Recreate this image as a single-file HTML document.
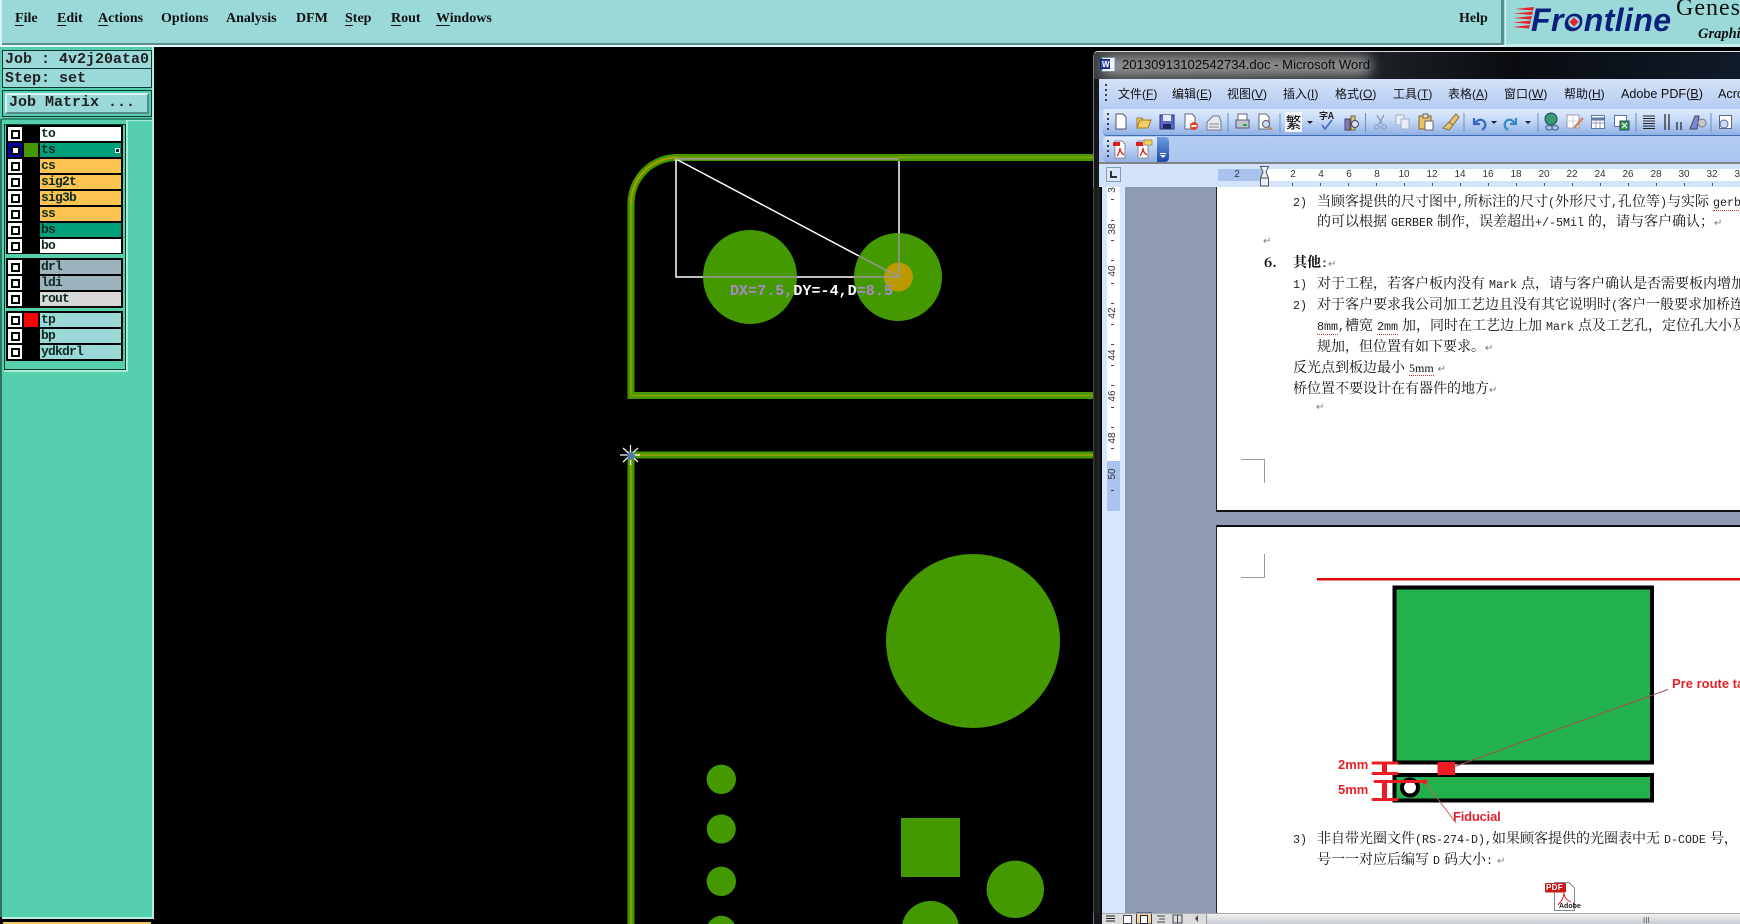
<!DOCTYPE html>
<html><head><meta charset="utf-8"><title>Genesis</title>
<style>
html,body{margin:0;padding:0;width:1740px;height:924px;overflow:hidden;background:#000}
#p{position:relative;width:1740px;height:924px;overflow:hidden;background:#000}
.a{position:absolute}
.mn{position:absolute;top:9px;font:bold 14px/20px "Liberation Serif",serif;color:#111;white-space:nowrap}
.mn u{text-underline-offset:3px;text-decoration-thickness:1px}
.mo{font-family:"Liberation Mono",monospace;font-weight:bold;color:#222;white-space:nowrap;position:absolute}
.r{position:absolute;left:8px;width:114px;height:14px}
.c{position:absolute;left:0;top:0;width:14px;height:14px;background:#fff}
.c:after{content:"";position:absolute;left:3px;top:3px;width:5px;height:5px;border:2px solid #000;background:#fff}
.b{position:absolute;left:16px;top:0;width:14px;height:14px}
.l{position:absolute;left:32px;top:0;width:81px;height:14px;font:bold 13px/14px "Liberation Mono",monospace;letter-spacing:-.8px;color:#0c2a20;text-indent:1px;overflow:hidden}
.wm{position:absolute;top:85px;font:12px/18px "Liberation Sans","Noto Sans CJK SC",sans-serif;color:#111;white-space:nowrap}
.wm.e{font-size:12.6px}
.rn{position:absolute;top:168px;width:20px;text-align:center;font:10px/13px "Liberation Sans",sans-serif;color:#333}
.vr{position:absolute;left:1103px;width:20px;height:12px;text-align:center;font:10px/12px "Liberation Sans",sans-serif;color:#333;transform:rotate(-90deg)}
.t{position:absolute;white-space:nowrap;font:14px/20px "Noto Serif CJK SC","Liberation Serif",serif;color:#111}
.t .m,.m{font:11.67px/20px "Liberation Mono",monospace;color:#222}
.t .s{font:12px/20px "Liberation Serif",serif}
.g{display:inline-block;width:4px}
.e1{position:absolute;white-space:nowrap;font:10px/12px "DejaVu Sans",sans-serif;color:#777}
.w{border-bottom:1px dotted #c33}
.red{position:absolute;white-space:nowrap;font:bold 13px/16px "Liberation Sans",sans-serif;color:#e4222c}
</style></head><body><div id="p">

<!-- top menu bar -->
<div class="a" style="left:0;top:0;width:1505px;height:47px;background:#9bd8d8;border-left:2px solid #d8f2f2;box-sizing:border-box"></div>
<div class="a" style="left:2px;top:43px;width:1501px;height:2px;background:#5b8e90"></div>
<div class="a" style="left:0;top:45px;width:1505px;height:2px;background:#e6f7f7"></div>
<div class="a" style="left:1501px;top:0;width:3px;height:45px;background:#5b8e90"></div>
<div class="a" style="left:1505px;top:0;width:235px;height:47px;background:#9bd8d8;border-left:1px solid #d8f2f2;box-sizing:border-box"></div>
<div class="a" style="left:1505px;top:44px;width:235px;height:3px;background:#c4eded"></div>
<span class="mn" style="left:15px"><u>F</u>ile</span>
<span class="mn" style="left:57px"><u>E</u>dit</span>
<span class="mn" style="left:98px"><u>A</u>ctions</span>
<span class="mn" style="left:161px">Options</span>
<span class="mn" style="left:226px">Analysis</span>
<span class="mn" style="left:296px">DFM</span>
<span class="mn" style="left:345px"><u>S</u>tep</span>
<span class="mn" style="left:391px"><u>R</u>out</span>
<span class="mn" style="left:436px"><u>W</u>indows</span>
<span class="mn" style="left:1459px">Help</span>
<!-- frontline logo -->
<svg class="a" style="left:0;top:0" width="1740" height="47"><g fill="#e8222a"><polygon points="1515,9 1534,7 1533,10.500"/><polygon points="1514,13.500 1533,11.500 1532,15"/><polygon points="1513.500,18 1532,16 1531,19.500"/><polygon points="1513,22.500 1531,20.500 1530,24"/><polygon points="1513,27 1530,25 1529,28.500"/></g></svg>
<div class="a" style="left:1531px;top:1px;font:italic bold 32px/38px 'Liberation Sans',sans-serif;color:#0b1f7c;white-space:nowrap;letter-spacing:.4px">Frontline</div>
<svg class="a" style="left:1564px;top:12px" width="20" height="20"><circle cx="10" cy="10" r="7" fill="#9bd8d8" stroke="#0b1f7c" stroke-width="2.4"/><polygon points="10,5.500 14.500,10 10,14.500 5.500,10" fill="#e8222a"/></svg>
<div class="a" style="left:1676px;top:-7px;font:24px/30px 'Liberation Serif',serif;color:#111;letter-spacing:1px;white-space:nowrap">Genesis</div>
<div class="a" style="left:1698px;top:25px;font:italic bold 14.5px/18px 'Liberation Serif',serif;color:#111;white-space:nowrap">Graphics</div>

<!-- left panel -->
<div class="a" style="left:0;top:47px;width:152px;height:870px;background:#55cfae"></div>
<div class="a" style="left:152px;top:47px;width:2px;height:872px;background:#b4efe0"></div>
<div class="a" style="left:0;top:119px;width:2px;height:798px;background:#2f7463"></div>
<div class="a" style="left:2px;top:118px;width:150px;height:2px;background:#2f8a74"></div>
<div class="a" style="left:128px;top:120px;width:24px;height:1px;background:#a8ecd8"></div>
<div class="a" style="left:2px;top:917px;width:152px;height:2px;background:#b4efe0"></div>
<div class="a" style="left:2px;top:921px;width:150px;height:4px;background:#f5c65a;border:1px solid #000;box-sizing:border-box"></div>
<div class="a" style="left:2px;top:50px;width:150px;height:38px;background:#9bd8d8;border:1px solid #0c3a30;box-sizing:border-box"></div>
<div class="a" style="left:3px;top:68px;width:148px;height:1px;background:#0c3a30"></div>
<div class="mo" style="left:5px;top:51px;font-size:15px;line-height:18px">Job : 4v2j20ata0</div>
<div class="mo" style="left:5px;top:70px;font-size:15px;line-height:18px">Step: set</div>
<div class="a" style="left:2px;top:90px;width:150px;height:27px;border:1px solid #0c3a30;box-sizing:border-box"></div>
<div class="a" style="left:5px;top:93px;width:144px;height:21px;background:#9bd8d8;border:2px solid;border-color:#d8f4f4 #55898c #55898c #d8f4f4;box-sizing:border-box"></div>
<div class="mo" style="left:9px;top:94px;font-size:15px;line-height:18px">Job Matrix ...</div>
<!-- layers frame -->
<div class="a" style="left:4px;top:124px;width:122px;height:246px;border:1px solid #0c3a30;box-sizing:border-box;background:#55cfae"></div>
<div class="a" style="left:126px;top:120px;width:2px;height:252px;background:#a8ecd8"></div>
<div class="a" style="left:4px;top:370px;width:124px;height:2px;background:#a8ecd8"></div>
<div class="a" style="left:6px;top:125px;width:117px;height:129px;background:#000"></div>
<div class="a" style="left:6px;top:258px;width:117px;height:50px;background:#000"></div>
<div class="a" style="left:6px;top:311px;width:117px;height:50px;background:#000"></div>

<div class="r" style="top:127px"><i class="c"></i><span class="l" style="background:#fff">to</span></div>
<div class="r" style="top:143px"><i class="c" style="background:#0000aa"></i><i class="b" style="background:#449900"></i><span class="l" style="background:#00a07a">ts</span></div>
<div class="r" style="top:159px"><i class="c"></i><span class="l" style="background:#fdc451">cs</span></div>
<div class="r" style="top:175px"><i class="c"></i><span class="l" style="background:#fdc451">sig2t</span></div>
<div class="r" style="top:191px"><i class="c"></i><span class="l" style="background:#fdc451">sig3b</span></div>
<div class="r" style="top:207px"><i class="c"></i><span class="l" style="background:#fdc451">ss</span></div>
<div class="r" style="top:223px"><i class="c"></i><span class="l" style="background:#00a07a">bs</span></div>
<div class="r" style="top:239px"><i class="c"></i><span class="l" style="background:#fff">bo</span></div>
<div class="r" style="top:260px"><i class="c"></i><span class="l" style="background:#9db3bd">drl</span></div>
<div class="r" style="top:276px"><i class="c"></i><span class="l" style="background:#9db3bd">ldi</span></div>
<div class="r" style="top:292px"><i class="c"></i><span class="l" style="background:#d8d8d8">rout</span></div>
<div class="r" style="top:313px"><i class="c"></i><i class="b" style="background:#f00"></i><span class="l" style="background:#9bd8d8">tp</span></div>
<div class="r" style="top:329px"><i class="c"></i><span class="l" style="background:#9bd8d8">bp</span></div>
<div class="r" style="top:345px"><i class="c"></i><span class="l" style="background:#9bd8d8">ydkdrl</span></div>
<div class="a" style="left:115px;top:148px;width:3px;height:3px;border:1px solid #fff;background:#0c2a20"></div>

<!-- PCB -->
<svg class="a" style="left:0;top:0" width="1740" height="924">
<g fill="none" stroke-linecap="butt">
<path d="M1095 157.500H677A46 46 0 0 0 631 203.500V395.500H1095" stroke="#449900" stroke-width="7"/>
<path d="M1095 157.500H677M631 203.500V395.500H1095" stroke="#7f9f00" stroke-width="2"/>
<path d="M677 157.500A46 46 0 0 0 631 203.500" stroke="#b09a00" stroke-width="2"/>
<path d="M1095 455H631V924" stroke="#449900" stroke-width="7"/>
<path d="M1095 455H631V924" stroke="#8a9c00" stroke-width="2"/>
</g>
<g fill="#449900">
<circle cx="750" cy="277" r="47"/><circle cx="898" cy="277" r="44"/>
<circle cx="973" cy="641" r="87"/>
<circle cx="721.300" cy="779.300" r="14.700"/><circle cx="721.300" cy="829" r="14.500"/><circle cx="721.300" cy="881.300" r="14.700"/><circle cx="721.300" cy="930.400" r="14.700"/>
<rect x="901" y="818" width="59" height="59"/>
<circle cx="1015.300" cy="889.300" r="28.700"/><circle cx="930.500" cy="930" r="29"/>
</g>
<circle cx="898.500" cy="277" r="14.500" fill="#bb9900"/>
<g fill="none" stroke-width="1.500">
<path d="M676 159V277H703M797 277H854M899 161V233M676 159L859 256" stroke="#fff"/>
<path d="M676 159H899M703 277H797M854 277H899V233M859 256L899 277" stroke="#999"/>
</g>
<g stroke="#fff" stroke-width="1.200">
<path d="M620 455H640M630.500 445V465M623 448L638 462M638 448L623 462"/>
</g>
<circle cx="631" cy="456" r="4" fill="#5577aa"/>
</svg>
<div class="a" style="left:730px;top:282px;font:bold 15px/20px 'Liberation Mono',monospace;letter-spacing:.05px;white-space:nowrap;color:#aa88cc">DX=7.5,<span style="color:#fff">DY=-4,D</span>=8.5</div>

<!-- Word window -->
<div class="a" style="left:1093px;top:51px;width:647px;height:873px;background:#14181d;border-radius:5px 0 0 0;border-top:1px solid #d8d8d8;border-left:1px solid #777;box-sizing:border-box;overflow:hidden">
<div class="a" style="left:0;top:0;width:646px;height:27px;background:linear-gradient(90deg,#3a3e42 0,#20252a 40%,#0a0c10 65%,#101a28 100%)"></div>
<div class="a" style="left:8px;top:4px;width:270px;height:20px;background:#909090;filter:blur(6px);border-radius:10px"></div>
</div>
<div class="a" style="left:1122px;top:55px;font:13.1px/19px 'Liberation Sans',sans-serif;color:#0c0c0c;white-space:nowrap">20130913102542734.doc - Microsoft Word</div>
<svg class="a" style="left:1100px;top:57px" width="17" height="17"><rect x="2" y="0.500" width="13" height="14" fill="#f2f4fa" stroke="#7a88a8"/><rect x="0.500" y="2.500" width="9" height="9" fill="#2a4aa8" stroke="#16256a"/><text x="2" y="10" font-size="8" font-weight="bold" fill="#fff" font-family="Liberation Sans">W</text></svg>

<!-- menus -->
<div class="a" style="left:1099px;top:79px;width:641px;height:30px;background:linear-gradient(#d5e3f9,#b4cbf2)"></div>
<div class="a" style="left:1099px;top:109px;width:641px;height:54px;background:linear-gradient(#c2d6f6,#a9c4f0)"></div>
<div class="a" style="left:1103px;top:109px;width:637px;height:27px;background:linear-gradient(#e0ebfc 0,#c4d8f7 45%,#8fb0e4 100%);border-bottom:1px solid #3c6cb4;border-radius:4px 0 0 4px;box-sizing:border-box"></div>
<div class="a" style="left:1103px;top:137px;width:55px;height:25px;background:linear-gradient(#e0ebfc,#8fb0e4);border-radius:4px 0 0 4px"></div>
<div class="a" style="left:1157px;top:137px;width:12px;height:25px;background:linear-gradient(#6f9be0,#1f4aa8);border-radius:0 4px 4px 0"></div>
<div class="a" style="left:1160px;top:153px;width:6px;height:1px;background:#fff"></div>
<div class="a" style="left:1160px;top:155px;border-left:3px solid transparent;border-right:3px solid transparent;border-top:3px solid #fff"></div>
<div class="a" style="left:1099px;top:162px;width:641px;height:2px;background:#808488"></div>
<span class="wm" style="left:1118px">文件(<u>F</u>)</span>
<span class="wm" style="left:1172px">编辑(<u>E</u>)</span>
<span class="wm" style="left:1227px">视图(<u>V</u>)</span>
<span class="wm" style="left:1283px">插入(<u>I</u>)</span>
<span class="wm" style="left:1335px">格式(<u>O</u>)</span>
<span class="wm" style="left:1393px">工具(<u>T</u>)</span>
<span class="wm" style="left:1448px">表格(<u>A</u>)</span>
<span class="wm" style="left:1504px">窗口(<u>W</u>)</span>
<span class="wm" style="left:1564px">帮助(<u>H</u>)</span>
<span class="wm e" style="left:1621px">Adobe PDF(<u>B</u>)</span>
<span class="wm e" style="left:1718px">Acrobat</span>

<!-- ruler area -->
<div class="a" style="left:1099px;top:164px;width:641px;height:23px;background:#d3e3fb"></div>
<div class="a" style="left:1218px;top:169px;width:44px;height:12px;background:#a9c2ee"></div>
<div class="a" style="left:1262px;top:169px;width:478px;height:12px;background:#fff"></div>
<div class="a" style="left:1106px;top:167px;width:15px;height:15px;background:#dce8fa;border:1px solid #7f9db9;box-sizing:border-box"></div>
<div class="a" style="left:1110px;top:171px;width:2px;height:7px;background:#333"></div>
<div class="a" style="left:1110px;top:176px;width:7px;height:2px;background:#333"></div>
<span class="rn" style="left:1227px">2</span>
<span class="rn" style="left:1283px">2</span><span class="rn" style="left:1311px">4</span><span class="rn" style="left:1339px">6</span><span class="rn" style="left:1367px">8</span><span class="rn" style="left:1394px">10</span><span class="rn" style="left:1422px">12</span><span class="rn" style="left:1450px">14</span><span class="rn" style="left:1478px">16</span><span class="rn" style="left:1506px">18</span><span class="rn" style="left:1534px">20</span><span class="rn" style="left:1562px">22</span><span class="rn" style="left:1590px">24</span><span class="rn" style="left:1618px">26</span><span class="rn" style="left:1646px">28</span><span class="rn" style="left:1674px">30</span><span class="rn" style="left:1702px">32</span><span class="rn" style="left:1730px">34</span>

<!-- document area -->
<div class="a" style="left:1093px;top:187px;width:9px;height:726px;background:linear-gradient(90deg,#444 0,#111 30%,#2a2a2a 60%,#000 100%)"></div>
<div class="a" style="left:1102px;top:187px;width:23px;height:737px;background:#d6e6fd"></div>
<div class="a" style="left:1107px;top:187px;width:13px;height:274px;background:#fff"></div>
<div class="a" style="left:1107px;top:461px;width:13px;height:50px;background:#a9c2ee"></div>
<div class="a" style="left:1125px;top:187px;width:615px;height:726px;background:#8f9bb3"></div>
<div class="a" style="left:1216px;top:187px;width:524px;height:325px;background:#fff;border-left:1px solid #222;border-bottom:2px solid #111;box-sizing:border-box"></div>
<div class="a" style="left:1216px;top:525px;width:524px;height:388px;background:#fff;border-left:1px solid #222;border-top:2px solid #111;box-sizing:border-box"></div>
<div class="a" style="left:1102px;top:913px;width:104px;height:11px;background:#dcdcdc"></div>
<div class="vr" style="top:184px">3</div>
<div class="vr" style="top:223px">38</div><div class="vr" style="top:265px">40</div><div class="vr" style="top:307px">42</div><div class="vr" style="top:349px">44</div><div class="vr" style="top:390px">46</div><div class="vr" style="top:432px">48</div><div class="vr" style="top:468px">50</div>

<svg class="a" style="left:0;top:0" width="1740" height="924">
<!-- ruler marker -->
<path d="M1260.500 166.500H1268.500L1266 172L1268.500 178V186H1260.500V178L1263 172Z" fill="#e8eef8" stroke="#555"/>
<path d="M1260.500 178H1268.500" stroke="#555"/>
<!-- horizontal ruler ticks -->
<path d="M1292.500 183v3M1320.500 183v3M1348.500 183v3M1376.500 183v3M1404.500 183v3M1432.500 183v3M1460.500 183v3M1488.500 183v3M1516.500 183v3M1544.500 183v3M1572.500 183v3M1600.500 183v3M1628.500 183v3M1656.500 183v3M1684.500 183v3M1712.500 183v3" stroke="#555"/>
<!-- vertical ruler ticks -->
<path d="M1111 199.500h3M1111 220.500h3M1111 240.500h3M1111 260.500h3M1111 283.500h3M1111 303.500h3M1111 324.500h3M1111 344.500h3M1111 365.500h3M1111 385.500h3M1111 407.500h3M1111 427.500h3M1111 448.500h3M1111 490.500h3" stroke="#444"/>
<!-- crop marks -->
<path d="M1241 459.500H1264.500V483M1264.500 554V577.500H1241" fill="none" stroke="#999"/>
<!-- handles -->
<g fill="#345"><path d="M1107 113h2v2h-2zM1107 118h2v2h-2zM1107 123h2v2h-2zM1107 128h2v2h-2zM1107 140h2v2h-2zM1107 145h2v2h-2zM1107 150h2v2h-2zM1107 155h2v2h-2zM1105 84h2v2h-2zM1105 89h2v2h-2zM1105 94h2v2h-2zM1105 99h2v2h-2z"/></g>
<!-- separators -->
<path d="M1228 113v19M1280 113v19M1365.500 113v19M1464 113v19M1538 113v19M1636 113v19M1711 113v19" stroke="#6f8fc4"/>
<!-- toolbar icons -->
<g stroke-width="1">
<path d="M1116 114h7l3 3v12h-10z" fill="#fff" stroke="#556"/>
<path d="M1137 128l3-8h11l-3 8zM1137 128v-10h5l1 2h6v1" fill="#f4cd68" stroke="#a47c28"/>
<rect x="1160" y="115" width="14" height="14" fill="#5a68c8" stroke="#2a3478"/><rect x="1163" y="115" width="8" height="6" fill="#e8ecf8"/><rect x="1163" y="124" width="8" height="5" fill="#20285c"/>
<path d="M1185 114h7l3 3v12h-10z" fill="#fff" stroke="#667"/><circle cx="1194" cy="126" r="4" fill="#dd4422"/><rect x="1191.500" y="125" width="5" height="2" fill="#fff"/>
<path d="M1207 122l6-6h6l2 6v8h-14z" fill="#e4e8f0" stroke="#778"/><path d="M1209 124h10M1209 127h10" stroke="#889"/>
<rect x="1236" y="120" width="13" height="8" fill="#bcc4d0" stroke="#556"/><rect x="1238" y="114" width="9" height="6" fill="#fff" stroke="#667"/><rect x="1243" y="124" width="4" height="2" fill="#2a4"/>
<path d="M1259 114h7l3 3v12h-10z" fill="#fff" stroke="#667"/><circle cx="1266" cy="124" r="3.500" fill="#cde" stroke="#556"/><path d="M1269 127l3 3" stroke="#c84" stroke-width="2"/>
<path d="M1322 125l3 4 7-9" fill="none" stroke="#4468c8" stroke-width="1.600"/>
<rect x="1345" y="119" width="5" height="11" fill="#8878b8" stroke="#446"/><rect x="1351" y="116" width="4" height="14" fill="#e0c868" stroke="#664"/><circle cx="1355" cy="124" r="3.500" fill="#dde" stroke="#446"/>
<path d="M1377 115l5 9M1384 115l-5 9" stroke="#889ab4" stroke-width="1.300"/><circle cx="1377" cy="127" r="2.300" fill="none" stroke="#889ab4"/><circle cx="1384" cy="127" r="2.300" fill="none" stroke="#889ab4"/>
<rect x="1396" y="115" width="8" height="10" fill="#e8edf6" stroke="#a0aec4"/><rect x="1401" y="119" width="8" height="10" fill="#e8edf6" stroke="#a0aec4"/>
<rect x="1419" y="116" width="12" height="13" fill="#e8c468" stroke="#886428"/><rect x="1423" y="114" width="5" height="4" fill="#ddd" stroke="#666"/><rect x="1425" y="121" width="8" height="9" fill="#fff" stroke="#667"/>
<path d="M1456 114l-7 8 4 3 6-8zM1449 122l-6 6 6 2 4-5z" fill="#e8c468" stroke="#887040"/>
<path d="M1474 118v6h6M1475 124c3-6 8-5 10-1 1 3 0 5-3 7" fill="none" stroke="#3468c4" stroke-width="2.200"/>
<path d="M1516 118v6h-6M1515 124c-3-6-8-5-10-1-1 3 0 5 3 7" fill="none" stroke="#3488c4" stroke-width="2.200"/>
<path d="M1491 121h6l-3 3zM1525 121h6l-3 3zM1307 121h6l-3 3z" fill="#223"/>
<circle cx="1551" cy="119" r="6" fill="#3a9a70" stroke="#246"/><path d="M1546 127c0-2 5-2 6 0s-1 3-3 3-3-1-3-3zM1552 127c0-2 5-2 6 0s-1 3-3 3-3-1-3-3z" fill="none" stroke="#5a7a9c" stroke-width="1.500"/>
<rect x="1567" y="115" width="12" height="13" fill="#fff" stroke="#99a"/><path d="M1573 115v13M1567 121h12" stroke="#ccd"/><path d="M1583 118l-9 10" stroke="#c86" stroke-width="2.500"/>
<rect x="1591.500" y="115.500" width="13" height="13" fill="#fff" stroke="#5a78a8"/><path d="M1591.500 119h13" stroke="#5a78a8" stroke-width="3"/><path d="M1596 119v9M1600 119v9M1591 123h13" stroke="#99b"/>
<rect x="1614.500" y="115.500" width="12" height="11" fill="#fff" stroke="#5a78a8"/><rect x="1620" y="121" width="9" height="9" fill="#3a9a48" stroke="#246"/><path d="M1622 123l5 5M1627 123l-5 5" stroke="#fff"/>
<path d="M1643 116h12M1643 118.500h12M1643 121h12M1643 123.500h12M1643 126h12M1643 128.500h12" stroke="#222"/>
<path d="M1665 114v16M1669 114v16M1677 122v8M1681 122v8" stroke="#222" stroke-width="1.200"/>
<path d="M1690 129l5-13h4l-2 13z" fill="#7a8ad0" stroke="#446"/><circle cx="1702" cy="123" r="4" fill="#c8c8d0" stroke="#778"/>
<rect x="1719.500" y="115.500" width="12" height="13" fill="#fff" stroke="#667"/><circle cx="1724" cy="124" r="4" fill="#cde" stroke="#56a"/>
<!-- pdf icons row 2 -->
<path d="M1115 141h7l3 3v14h-10z" fill="#fff" stroke="#889"/><rect x="1113" y="142" width="7" height="4" fill="#d82020"/><path d="M1117 156c2-3 3-6 3-8 0 2 1 5 4 7" fill="none" stroke="#d82020" stroke-width="1.300"/>
<path d="M1138 141h7l3 3v14h-10z" fill="#fff" stroke="#889"/><rect x="1136" y="142" width="7" height="4" fill="#d82020"/><path d="M1140 156c2-3 3-6 3-8 0 2 1 5 4 7" fill="none" stroke="#d82020" stroke-width="1.300"/><rect x="1144" y="140" width="8" height="5" fill="#f4d848" stroke="#a88"/>
<!-- red header rule on page 2 -->
<rect x="1317" y="578" width="423" height="2.500" fill="#dd0a0a"/>
<!-- figure on page 2 -->
<rect x="1394.500" y="587.500" width="257.500" height="175" fill="#23b14d" stroke="#000" stroke-width="4"/>
<rect x="1394.500" y="775" width="257.500" height="25.500" fill="#23b14d" stroke="#000" stroke-width="4"/>
<circle cx="1410" cy="787.500" r="8" fill="#fff" stroke="#000" stroke-width="4"/>
<rect x="1437.500" y="762" width="17.500" height="13" fill="#ed1c24"/>
<path d="M1455 766.500L1668 689.500" stroke="#a05050" stroke-width="1"/>
<path d="M1425 782L1456 823" stroke="#c86060" stroke-width="1"/>
<g stroke="#ed1c24" fill="none" stroke-linecap="round">
<path d="M1373 763H1397M1373 773.500H1397M1375 781.500H1425M1373 799.500H1397" stroke-width="3"/>
<path d="M1384.500 763V773.500M1384.500 782V799.500" stroke-width="5" stroke-linecap="butt"/>
</g>
<circle cx="1425" cy="782" r="2" fill="none" stroke="#ed1c24"/>
<!-- pdf attachment icon -->
<path d="M1554.500 882.500H1569L1574.500 888V910.500H1554.500Z" fill="#fff" stroke="#889"/>
<rect x="1545" y="883" width="21" height="9.500" rx="1" fill="#c81818"/>
<path d="M1558 905c4-4 6-9 6-12 0 3 2 7 7 9" fill="none" stroke="#dd2222"/>
<!-- bottom bar icons -->
<path d="M1106 916h9M1106 918.500h9M1106 921h9" stroke="#222" stroke-width="1"/>
<rect x="1123.500" y="915.500" width="8" height="8" fill="#fff" stroke="#445"/>
<rect x="1136.500" y="913" width="15" height="11" fill="#fbd38a" stroke="#223a70"/><rect x="1140.500" y="915.500" width="7" height="8" fill="#fff" stroke="#223"/>
<path d="M1157 916h8M1159 919h6M1157 922h8M1173 915h9v8h-9zM1177.500 915v8" stroke="#445" fill="none"/>
<path d="M1198 915v7l-3-3.500z" fill="#445"/>
</svg>
<div class="a" style="left:1285px;top:112px;width:17px;height:20px;background:#f4f6fb;font:15.5px/20px 'Noto Sans CJK SC',sans-serif;color:#000;overflow:hidden;text-align:center">繁</div>
<div class="a" style="left:1319px;top:111px;font:bold 9px/10px 'Noto Sans CJK SC',sans-serif;color:#222">字A</div>
<div class="a" style="left:1546px;top:883px;font:bold 8px/9px 'Liberation Sans',sans-serif;color:#fff;letter-spacing:.3px">PDF</div>
<div class="a" style="left:1559px;top:903px;font:bold 7px/8px 'Liberation Sans',sans-serif;color:#222">Adobe</div>
<div class="a" style="left:1102px;top:913px;width:638px;height:1px;background:#aaa"></div>

<!-- page text -->
<div class="t" style="left:1293px;top:191px"><span class="m">2)</span></div>
<div class="t" style="left:1317px;top:191px">当顾客提供的尺寸图中<span class="m">,</span>所标注的尺寸<span class="m">(</span>外形尺寸<span class="m">,</span>孔位等<span class="m">)</span>与实际<i class="g"></i><span class="m w">gerber</span><i class="g"></i>文件</div>
<div class="t" style="left:1317px;top:211px">的可以根据<i class="g"></i><span class="m">GERBER</span><i class="g"></i>制作&#65292;误差超出<span class="m">+/-5Mil</span><i class="g"></i>的&#65292;请与客户确认&#65307;<span class="e1" style="position:static">↵</span></div>
<div class="e1" style="left:1263px;top:236px">↵</div>
<div class="t" style="left:1264px;top:252px;font-weight:bold">6.</div>
<div class="t" style="left:1293px;top:252px;font-weight:bold">其他<span class="m" style="font-weight:bold">:</span><span class="e1" style="position:static;font-weight:normal">↵</span></div>
<div class="t" style="left:1293px;top:273px"><span class="m">1)</span></div>
<div class="t" style="left:1317px;top:273px">对于工程&#65292;若客户板内没有<i class="g"></i><span class="m">Mark</span><i class="g"></i>点&#65292;请与客户确认是否需要板内增加</div>
<div class="t" style="left:1293px;top:294px"><span class="m">2)</span></div>
<div class="t" style="left:1317px;top:294px">对于客户要求我公司加工艺边且没有其它说明时<span class="m">(</span>客户一般要求加桥连</div>
<div class="t" style="left:1317px;top:315px"><span class="m w">8mm</span><span class="m">,</span>槽宽<i class="g"></i><span class="m w">2mm</span><i class="g"></i>加&#65292;同时在工艺边上加<i class="g"></i><span class="m">Mark</span><i class="g"></i>点及工艺孔&#65292;定位孔大小及</div>
<div class="t" style="left:1317px;top:336px">规加&#65292;但位置有如下要求。<span class="e1" style="position:static">↵</span></div>
<div class="t" style="left:1293px;top:357px">反光点到板边最小<i class="g"></i><span class="s w">5mm</span><i class="g"></i><span class="e1" style="position:static">↵</span></div>
<div class="t" style="left:1293px;top:378px">桥位置不要设计在有器件的地方<span class="e1" style="position:static">↵</span></div>
<div class="e1" style="left:1316px;top:402px">↵</div>

<div class="red" style="left:1672px;top:676px">Pre route tab</div>
<div class="red" style="left:1338px;top:757px">2mm</div>
<div class="red" style="left:1338px;top:782px">5mm</div>
<div class="red" style="left:1453px;top:809px;letter-spacing:-.2px">Fiducial</div>
<div class="t" style="left:1293px;top:828px"><span class="m">3)</span></div>
<div class="t" style="left:1317px;top:828px">非自带光圈文件<span class="m">(RS-274-D),</span>如果顾客提供的光圈表中无<i class="g"></i><span class="m">D-CODE</span><i class="g"></i>号&#65292;</div>
<div class="t" style="left:1317px;top:849px">号一一对应后编写<i class="g"></i><span class="m">D</span><i class="g"></i>码大小<span class="m">:</span><i class="g"></i><span class="e1" style="position:static">↵</span></div>

<!-- bottom bar -->
<div class="a" style="left:1206px;top:914px;width:534px;height:10px;background:linear-gradient(#f2f2f2,#c8ccd2);border-left:1px solid #999;box-sizing:border-box"></div>
<div class="a" style="left:1643px;top:917px;font:8px/8px 'Liberation Sans',sans-serif;color:#555">III</div>

</div></body></html>
